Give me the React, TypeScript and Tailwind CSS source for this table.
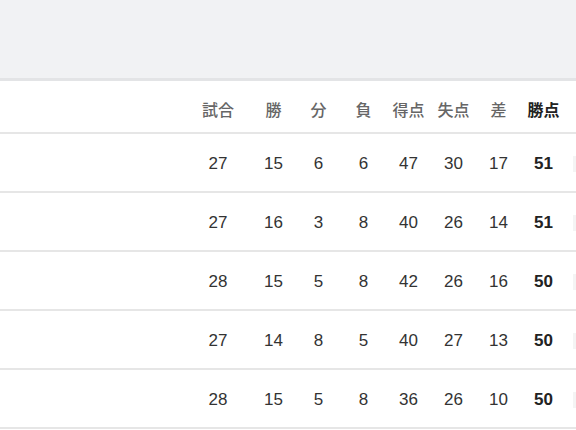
const columns = ['試合', '勝', '分', '負', '得点', '失点', '差', '勝点'];

const rows = [
  [27, 15, 6, 6, 47, 30, 17, 51],
  [27, 16, 3, 8, 40, 26, 14, 51],
  [28, 15, 5, 8, 42, 26, 16, 50],
  [27, 14, 8, 5, 40, 27, 13, 50],
  [28, 15, 5, 8, 36, 26, 10, 50],
];

const cellWidth = (i: number) => (i === 0 ? 'w-[66px]' : 'w-[45px]');

export default function App() {
  return (
    <div className="w-[576px] h-[430px] overflow-hidden bg-white font-['Liberation_Sans','Noto_Sans_CJK_JP',sans-serif]">
      <div className="h-[81px] bg-[#f1f2f4] border-b-[3px] border-[#e3e4e6]" />
      <div className="flex h-[53px] items-end pb-[9px] border-b-2 border-[#e6e6e6] text-[16px] font-medium text-[#666]">
        <div className="w-[185px] shrink-0" />
        {columns.map((c, i) => (
          <div
            key={c}
            className={`${cellWidth(i)} shrink-0 text-center ${i === 7 ? 'font-bold text-[#222]' : ''}`}
          >
            {c}
          </div>
        ))}
      </div>
      {rows.map((row, r) => (
        <div
          key={r}
          className="flex h-[59px] items-center pt-[2px] border-b-2 border-[#e6e6e6] text-[17px] text-[#333]"
        >
          <div className="w-[185px] shrink-0" />
          {row.map((v, i) => (
            <div
              key={i}
              className={`${cellWidth(i)} shrink-0 text-center ${i === 7 ? 'font-bold text-[#222]' : ''}`}
            >
              {v}
            </div>
          ))}
          <div className="ml-[7px] h-[16px] w-[4px] bg-[#f4f4f4]" />
        </div>
      ))}
    </div>
  );
}
